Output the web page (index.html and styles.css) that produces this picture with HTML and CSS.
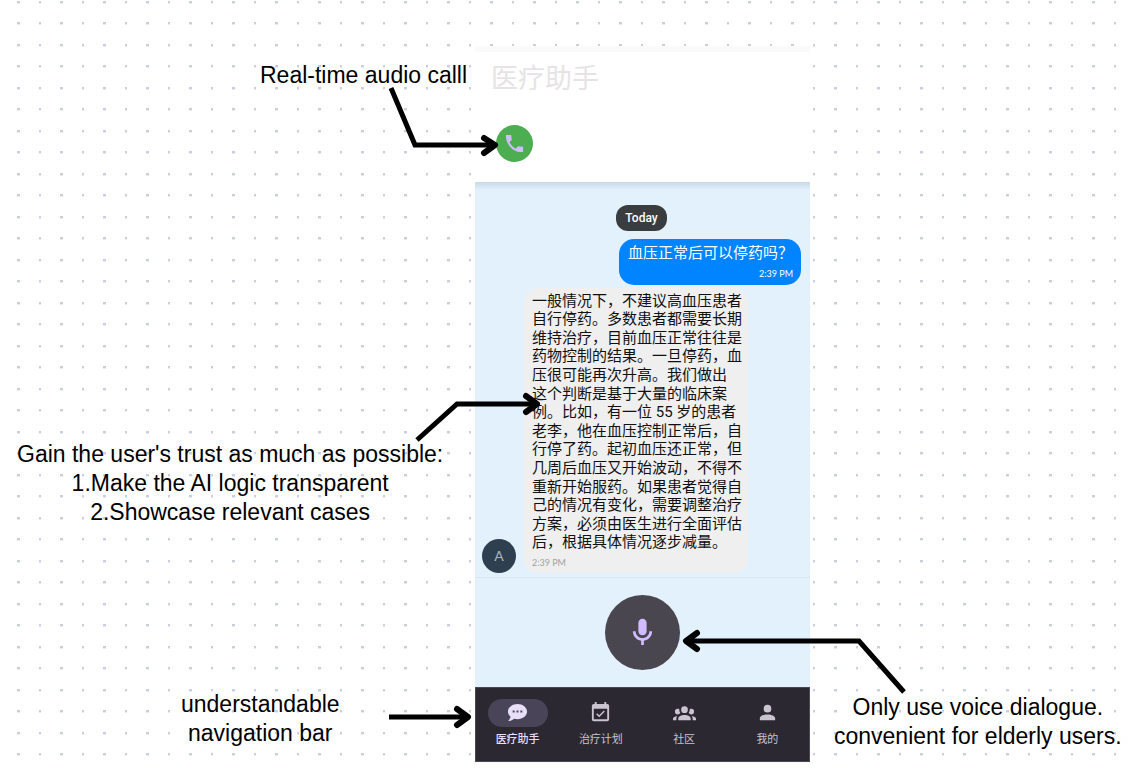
FILE: index.html
```html
<!DOCTYPE html>
<html lang="en">
<head>
<meta charset="utf-8">
<meta name="viewport" content="width=device-width, initial-scale=1">
<title>医疗助手</title>
<link rel="stylesheet" href="styles.css">
</head>
<body>
<main class="board">
  <svg class="board-grid" aria-hidden="true">
    <defs>
      <pattern id="dots" width="43" height="43" patternUnits="userSpaceOnUse">
        <g fill="#e6eaf1">
          <rect x="17" y="1" width="3" height="3"/><rect x="39" y="1" width="2" height="3"/>
          <rect x="17" y="22" width="3" height="3"/><rect x="39" y="22" width="2" height="3"/>
        </g>
        <g fill="#c9cfdc">
          <rect x="17" y="1" width="3" height="2"/><rect x="39" y="1" width="2" height="2"/>
          <rect x="17" y="22" width="3" height="2"/><rect x="39" y="22" width="2" height="2"/>
        </g>
      </pattern>
    </defs>
    <rect width="100%" height="100%" fill="url(#dots)"/>
  </svg>

  <section class="phone" lang="zh">
    <header class="app-header">
      <h1 class="app-title">医疗助手</h1>
      <button class="call-button" type="button" aria-label="Call">
        <svg viewBox="0 0 24 24" width="23" height="23"><path d="M21 15.46l-5.27-.61-2.52 2.52a15.05 15.05 0 0 1-6.59-6.59l2.53-2.53L8.54 3H3.03C2.45 13.18 10.82 21.55 21 20.97z"/></svg>
      </button>
    </header>
    <div class="chat">
      <span class="day">Today</span>
      <div class="bubble bubble-user">
        <p class="message">血压正常后可以停药吗？</p>
        <time class="time">2:39 PM</time>
      </div>
      <div class="reply">
        <span class="avatar">A</span>
        <div class="bubble bubble-bot">
          <p class="message">一般情况下，不建议高血压患者<br>自行停药。多数患者都需要长期<br>维持治疗，目前血压正常往往是<br>药物控制的结果。一旦停药，血<br>压很可能再次升高。我们做出<br>这个判断是基于大量的临床案<br>例。比如，有一位 55 岁的患者<br>老李，他在血压控制正常后，自<br>行停了药。起初血压还正常，但<br>几周后血压又开始波动，不得不<br>重新开始服药。如果患者觉得自<br>己的情况有变化，需要调整治疗<br>方案，必须由医生进行全面评估<br>后，根据具体情况逐步减量。</p>
          <time class="time">2:39 PM</time>
        </div>
      </div>
    </div>
    <div class="voice">
      <button class="mic-button" type="button" aria-label="Speak">
        <svg viewBox="0 0 24 24" width="33" height="33"><path d="M12 14c1.66 0 3-1.34 3-3V5c0-1.66-1.34-3-3-3S9 3.34 9 5v6c0 1.66 1.34 3 3 3zM17 11c0 2.76-2.24 5-5 5s-5-2.24-5-5H5c0 3.53 2.61 6.43 6 6.92V21h2v-3.08c3.39-.49 6-3.39 6-6.92h-2z"/></svg>
      </button>
    </div>
    <nav class="tabs">
      <a class="tab tab-active" href="#assistant">
        <span class="tab-icon"><svg viewBox="0 0 24 24" width="23" height="23"><path d="M12,3C17.5,3 22,6.58 22,11C22,15.42 17.5,19 12,19C10.76,19 9.57,18.82 8.47,18.5C5.55,21 2,21 2,21C4.33,18.67 4.7,17.1 4.75,16.5C3.05,15.07 2,13.13 2,11C2,6.58 6.5,3 12,3M17,12V10H15V12H17M13,12V10H11V12H13M9,12V10H7V12H9Z"/></svg></span>
        医疗助手
      </a>
      <a class="tab" href="#plan">
        <span class="tab-icon"><svg viewBox="0 0 24 24" width="23" height="23"><path d="M19,19H5V8H19M19,3H18V1H16V3H8V1H6V3H5C3.89,3 3,3.9 3,5V19A2,2 0 0,0 5,21H19A2,2 0 0,0 21,19V5A2,2 0 0,0 19,3M16.53,11.06L15.47,10L10.59,14.88L8.47,12.76L7.41,13.82L10.59,17L16.53,11.06Z"/></svg></span>
        治疗计划
      </a>
      <a class="tab" href="#community">
        <span class="tab-icon"><svg viewBox="0 0 24 24" width="23" height="23"><path d="M12,5.5A3.5,3.5 0 0,1 15.5,9A3.5,3.5 0 0,1 12,12.5A3.5,3.5 0 0,1 8.5,9A3.5,3.5 0 0,1 12,5.5M5,8C5.56,8 6.08,8.15 6.53,8.42C6.38,9.85 6.8,11.27 7.66,12.38C7.16,13.34 6.16,14 5,14A3,3 0 0,1 2,11A3,3 0 0,1 5,8M19,8A3,3 0 0,1 22,11A3,3 0 0,1 19,14C17.84,14 16.84,13.34 16.34,12.38C17.2,11.27 17.62,9.85 17.47,8.42C17.92,8.15 18.44,8 19,8M5.5,18.25C5.5,16.18 8.41,14.5 12,14.5C15.59,14.5 18.5,16.18 18.5,18.25V20H5.5V18.25M0,20V18.5C0,17.11 1.89,15.94 4.45,15.6C3.86,16.28 3.5,17.22 3.5,18.25V20H0M24,20H20.5V18.25C20.5,17.22 20.14,16.28 19.55,15.6C22.11,15.94 24,17.11 24,18.5V20Z"/></svg></span>
        社区
      </a>
      <a class="tab" href="#me">
        <span class="tab-icon"><svg viewBox="0 0 24 24" width="23" height="23"><path d="M12,4A4,4 0 0,1 16,8A4,4 0 0,1 12,12A4,4 0 0,1 8,8A4,4 0 0,1 12,4M12,14C16.42,14 20,15.79 20,18V20H4V18C4,15.79 7.58,14 12,14Z"/></svg></span>
        我的
      </a>
    </nav>
  </section>

  <p class="note note-call">Real-time audio calll</p>
  <p class="note note-trust">Gain the user's trust as much as possible:<br>1.Make the AI logic transparent<br>2.Showcase relevant cases</p>
  <p class="note note-nav">understandable<br>navigation bar</p>
  <p class="note note-voice">Only use voice dialogue.<br>convenient for elderly users.</p>

  <svg class="board-arrows" aria-hidden="true">
    <path d="M391 88L415 145H495"/><path class="head" d="M484 138L495 145L484 153"/>
    <path d="M417 440L457 404H536"/><path class="head" d="M526 396L537 404L526 412"/>
    <path d="M904 692L859 641H687"/><path class="head" d="M697 633L686 641L697 649"/>
    <path d="M389 717H468"/><path class="head" d="M457 709L468 717L457 725"/>
  </svg>
</main>
</body>
</html>
```
FILE: styles.css
```css
* {
  box-sizing: border-box;
}

body {
  margin: 0;
  background: #ffffff;
  color: #000000;
  font-family: "Liberation Sans", "Noto Sans CJK SC", sans-serif;
}

h1,
p {
  margin: 0;
}

button {
  padding: 0;
  border: 0;
}

svg {
  display: block;
  fill: currentColor;
}

.board {
  position: relative;
  min-height: 100vh;
  overflow: hidden;
}

.board-grid,
.board-arrows {
  position: absolute;
  inset: 0;
  width: 100%;
  height: 100%;
}

.board-arrows {
  fill: none;
  stroke: #000000;
  stroke-width: 5;
  pointer-events: none;
}

.head {
  stroke-width: 6;
  stroke-linecap: round;
  stroke-linejoin: round;
}

/* Phone mockup */
.phone {
  position: absolute;
  top: 46px;
  left: 475px;
  width: 335px;
  background: #e3f1fd;
  font-family: Roboto, "Noto Sans CJK SC", sans-serif;
}

.app-header {
  padding: 13px 16px 20px;
  border-top: 6px solid #fafafa;
  background: #ffffff;
}

.app-title {
  color: #e6e3e6;
  font-size: 27px;
  font-weight: 400;
  line-height: 28px;
}

.call-button {
  display: grid;
  place-items: center;
  width: 37px;
  height: 37px;
  margin-top: 32px;
  margin-left: 5px;
  border-radius: 50%;
  background: #4cae50;
  color: #d0bcff;
}

.chat {
  display: flex;
  flex-direction: column;
  padding: 23px 9px 4px 7px;
  border-bottom: 1px solid #d8e6f1;
  background: linear-gradient(#c8d9e6, #e3f1fd 8px);
}

.day {
  align-self: center;
  padding: 0 9px;
  border-radius: 12px;
  background: #3a3d40;
  color: #ffffff;
  font-size: 12px;
  font-weight: 500;
  line-height: 26px;
}

.bubble {
  display: flex;
  flex-direction: column;
  padding: 4px 8px;
  border-radius: 15px;
}

.message {
  font-size: 15px;
  line-height: 1.24;
}

.time {
  font-family: Lato, sans-serif;
  font-size: 9px;
  line-height: 12px;
}

.bubble-user {
  align-self: flex-end;
  gap: 5px;
  margin-top: 8px;
  padding: 5px 8px 5px 9px;
  background: #0084ff;
  color: #ffffff;
}

.bubble-user .time {
  align-self: flex-end;
}

.reply {
  display: flex;
  align-items: flex-end;
  gap: 8px;
  margin-top: 3px;
}

.avatar {
  width: 34px;
  border-radius: 50%;
  background: #2e3f50;
  color: #aab4bd;
  font-family: Lato, sans-serif;
  font-size: 14px;
  line-height: 34px;
  text-align: center;
}

.bubble-bot {
  gap: 5px;
  padding: 4px 6px 4px 8px;
  background: #efefef;
  color: #101010;
}

.bubble-bot .time {
  color: #a2a2a2;
}

.voice {
  display: grid;
  place-items: center;
  padding: 17px 0;
}

.mic-button {
  display: grid;
  place-items: center;
  width: 75px;
  height: 75px;
  border-radius: 50%;
  background: #4a464f;
  color: #d0bcff;
}

.tabs {
  display: grid;
  grid-template-columns: repeat(4, 1fr);
  padding: 11px 0 13px;
  border: 1px solid #4b4950;
  background: #2b2831;
}

.tab {
  display: flex;
  flex-direction: column;
  align-items: center;
  gap: 5px;
  color: #cac4d0;
  font-size: 11px;
  line-height: 16px;
  text-decoration: none;
}

.tab-icon {
  display: grid;
  place-items: center;
  width: 60px;
  height: 28px;
  border-radius: 14px;
}

.tab-active {
  color: #e8def8;
  font-weight: 500;
}

.tab-active .tab-icon {
  background: #4a4458;
}

/* Annotations placed on the board */
.note {
  position: absolute;
  font-size: 23px;
  line-height: 29px;
  text-align: center;
  white-space: nowrap;
}

.note-call {
  top: 61px;
  left: 260px;
}

.note-trust {
  top: 440px;
  left: 17px;
}

.note-nav {
  top: 690px;
  left: 181px;
}

.note-voice {
  top: 693px;
  left: 834px;
}
```
